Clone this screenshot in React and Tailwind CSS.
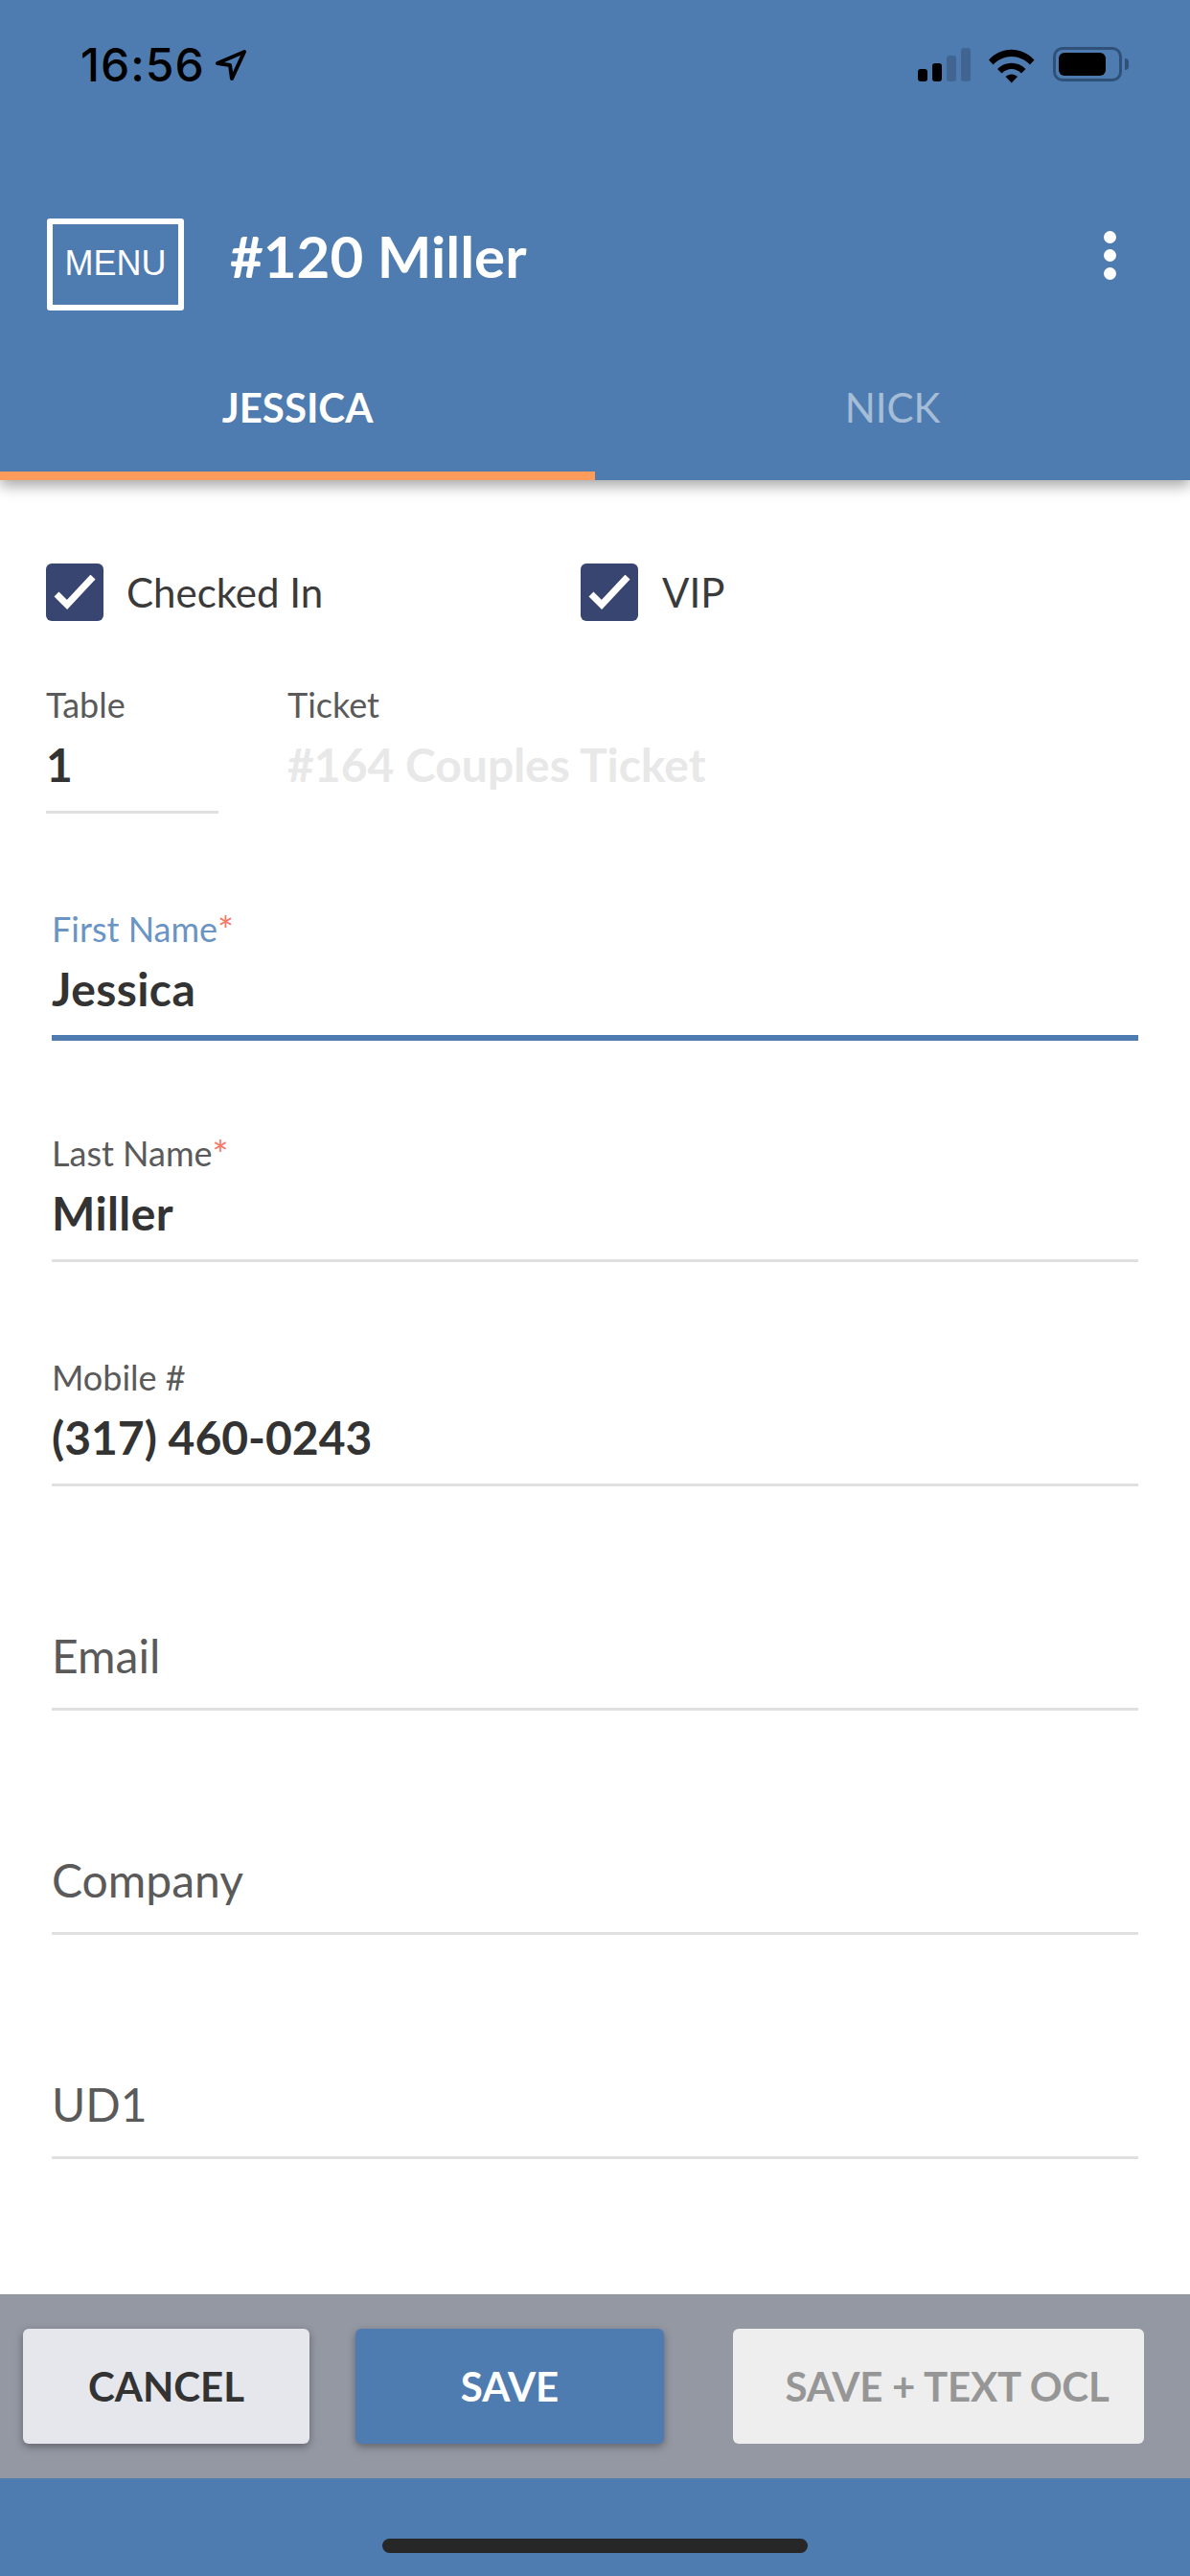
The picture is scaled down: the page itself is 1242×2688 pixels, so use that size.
const Check = () => (
  <div className="flex h-[60px] w-[60px] items-center justify-center rounded-[6px] bg-[#374570]">
    <svg width="46" height="36" viewBox="0 0 46 36" fill="none">
      <path d="M4 20L15 31L42 2" stroke="#fff" strokeWidth="7" />
    </svg>
  </div>
);

const Field = ({ label, value, required, active, compact, tight }) => (
  <div className={`flex flex-col justify-end ${compact ? "h-[231px]" : "h-[234px]"} ${active ? "border-b-[6px] border-[#4e7cb1]" : "border-b-[3px] border-[#e0e0e0]"} ${value ? "pb-[18px]" : "pb-[24px]"}`}>
    {value ? (
      <>
        <div className={`text-[36px] leading-[44px] ${active ? "text-[#6a94c4]" : "text-[#5a5a5a]"}`}>
          {label}
          {required && <span className="relative top-[3px] text-[40px] leading-[20px] text-[#f4796b]">*</span>}
        </div>
        <div className={`mt-[11px] text-[48px] font-bold leading-[60px] text-[#333333] ${tight ? "" : "tracking-[0.4px]"}`}>{value}</div>
      </>
    ) : (
      <div className="text-[48px] leading-[60px] text-[#5a5a5a]">{label}</div>
    )}
  </div>
);

export default function App() {
  return (
    <div className="flex h-[2688px] w-[1242px] flex-col overflow-hidden bg-white font-['Lato',sans-serif]">
      <header className="relative z-10 h-[501px] shrink-0 bg-[#4e7cb1] shadow-[0_6px_14px_rgba(0,0,0,0.35)]">
        <div className="flex h-[228px] items-start justify-between pl-[84px] pr-[64px] pt-[40px]">
          <div className="flex items-center gap-[10px]">
            <span className="font-['Inter',sans-serif] text-[48px] font-medium leading-[56px] tracking-[1px] text-black">16:56</span>
            <svg width="34" height="34" viewBox="0 0 34 34" fill="none">
              <path d="M3 15L31 3L18 31L16 17Z" stroke="#000" strokeWidth="4" strokeLinejoin="round" />
            </svg>
          </div>
          <div className="mt-[9px] flex items-start">
            <svg width="58" height="38" viewBox="0 0 58 38">
              <rect x="3" y="23" width="10" height="13" rx="3" fill="#000" />
              <rect x="18" y="17" width="10" height="19" rx="3" fill="#000" />
              <rect x="33" y="9" width="10" height="27" rx="3" fill="#3f6590" />
              <rect x="48" y="1" width="10" height="35" rx="3" fill="#3f6590" />
            </svg>
            <svg className="ml-[19px]" width="48" height="38" viewBox="0 0 48 38" fill="#000">
              <path d="M0 13.5C13 -1 34 -1 47.500 13.500L43 18.500C32 7 15.500 7 4.500 18.500Z" />
              <path d="M9 23C17 14.500 30.500 14.500 38.500 23L34 27.500C28 21.500 19.500 21.500 13.500 27.500Z" />
              <path d="M17.500 31C21 27.500 26.500 27.500 30 31L23.750 37.500Z" />
            </svg>
            <div className="ml-[19px] flex items-center">
              <div className="h-[36px] w-[72px] rounded-[10px] border-[3px] border-[#2f5078] p-[3px]">
                <div className="h-full w-[49px] rounded-[6px] bg-black" />
              </div>
              <div className="ml-[3px] h-[12px] w-[4px] rounded-r-[4px] bg-[#2f5078]" />
            </div>
          </div>
        </div>
        <div className="flex h-[96px] items-center pl-[49px] pr-[77px]">
          <div className="flex h-[96px] w-[143px] items-center justify-center rounded-[3px] border-[6px] border-white pb-[2px] font-['Liberation_Sans',sans-serif] text-[36px] text-white">
            MENU
          </div>
          <div className="ml-[48px] -mt-[19px] text-[60px] font-bold leading-[72px] text-white">#120 Miller</div>
          <div className="ml-auto -mt-[19px] flex flex-col gap-[6px]">
            <div className="h-[13px] w-[13px] rounded-full bg-white" />
            <div className="h-[13px] w-[13px] rounded-full bg-white" />
            <div className="h-[13px] w-[13px] rounded-full bg-white" />
          </div>
        </div>
        <div className="absolute bottom-0 left-0 flex h-[113px] w-full">
          <div className="flex w-[621px] items-start justify-center border-b-[9px] border-[#ff9c5b] pt-[12px] text-[42px] font-bold leading-[50px] text-white">JESSICA</div>
          <div className="flex w-[621px] items-start justify-center pt-[12px] text-[42px] leading-[50px] text-white/50">NICK</div>
        </div>
      </header>

      <main className="min-h-0 flex-1">
        <div className="flex pl-[48px] pt-[87px]">
          <div className="flex w-[558px] items-center gap-[24px] text-[42px] text-[#3a3a3a]">
            <Check />
            <span className="leading-[50px]">Checked In</span>
          </div>
          <div className="flex items-center gap-[25px] text-[42px] text-[#3a3a3a]">
            <Check />
            <span className="leading-[50px]">VIP</span>
          </div>
        </div>
        <div className="mt-[65px] flex pl-[48px]">
          <div className="h-[136px] w-[180px] border-b-[3px] border-[#e0e0e0]">
            <div className="text-[36px] leading-[44px] text-[#5a5a5a]">Table</div>
            <div className="mt-[11px] text-[48px] font-bold leading-[60px] text-[#333333]">1</div>
          </div>
          <div className="ml-[72px]">
            <div className="text-[36px] leading-[44px] text-[#5a5a5a]">Ticket</div>
            <div className="mt-[11px] text-[48px] font-bold leading-[60px] text-[#e8e8e8]">#164 Couples Ticket</div>
          </div>
        </div>
        <div className="mx-[54px] mt-[3px]">
          <Field label="First Name" value="Jessica" required active />
          <Field label="Last Name" value="Miller" required compact />
          <Field label="Mobile #" value="(317) 460-0243" tight />
          <Field label="Email" />
          <Field label="Company" />
          <Field label="UD1" />
        </div>
      </main>

      <footer className="flex h-[192px] shrink-0 items-center bg-[#9498a3] pl-[24px]">
        <button className="h-[120px] w-[299px] rounded-[6px] bg-[#e6e7ec] text-[42px] font-bold text-[#333333] shadow-[0_3px_8px_rgba(0,0,0,0.35)]">CANCEL</button>
        <button className="ml-[48px] h-[120px] w-[322px] rounded-[6px] bg-[#4e7cb1] text-[42px] font-bold text-white shadow-[0_3px_8px_rgba(0,0,0,0.35)]">SAVE</button>
        <button className="ml-[72px] h-[120px] w-[429px] rounded-[6px] bg-[#eeeeee] pl-[18px] text-[42px] font-bold tracking-[-0.2px] text-[#969696]">SAVE + TEXT OCL</button>
      </footer>
      <div className="flex h-[102px] shrink-0 justify-center bg-[#4e7cb1] pt-[63px]">
        <div className="h-[15px] w-[444px] rounded-full bg-[#272727]" />
      </div>
    </div>
  );
}
